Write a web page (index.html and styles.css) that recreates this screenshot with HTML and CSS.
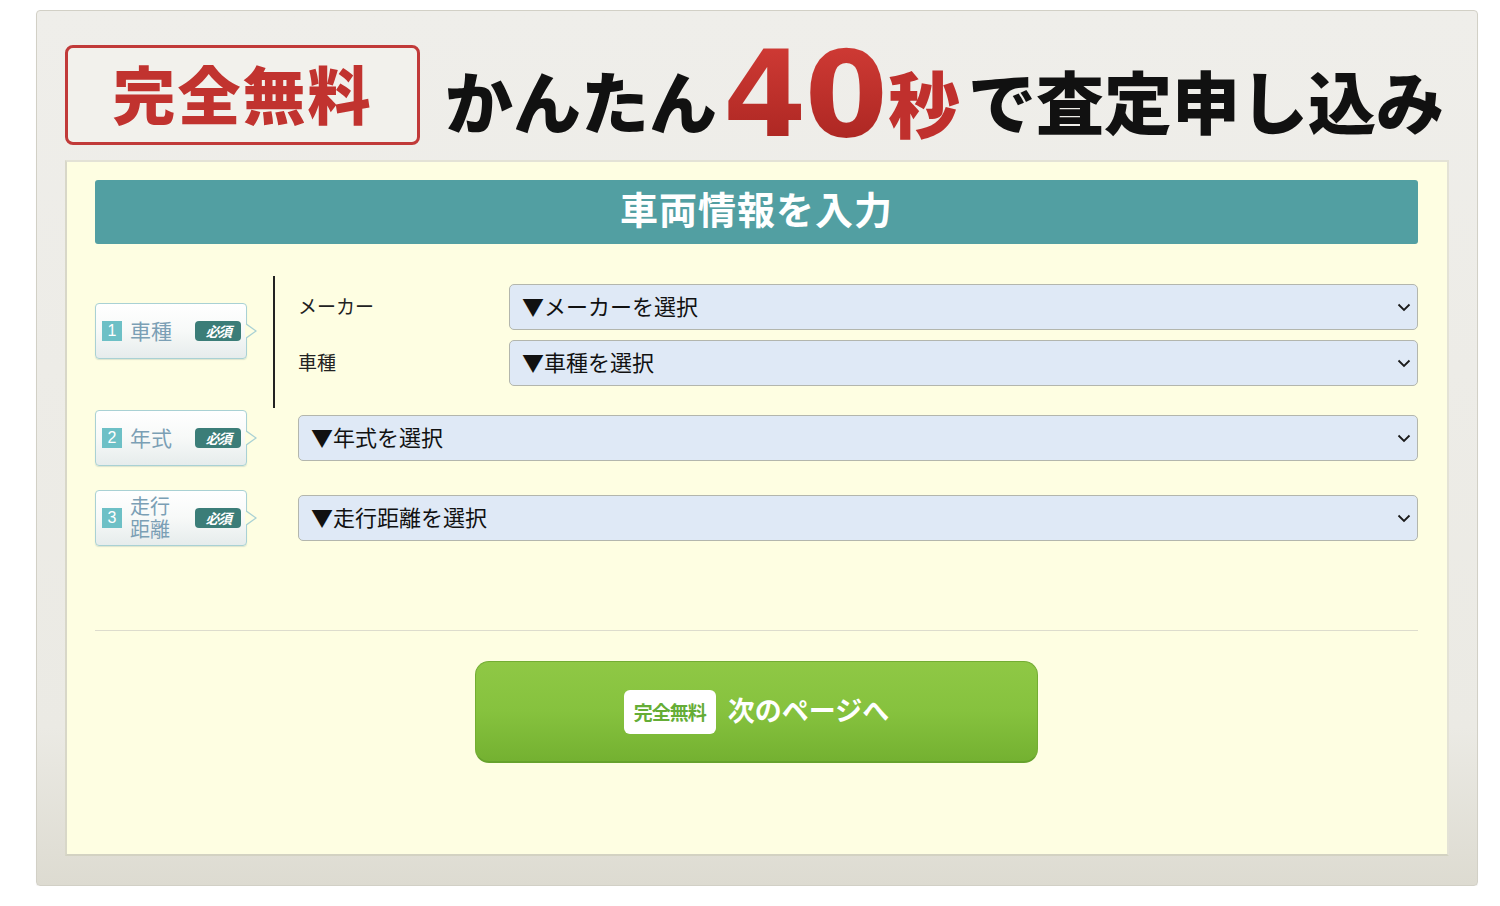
FILE: index.html
```html
<!DOCTYPE html>
<html lang="ja">
<head>
<meta charset="utf-8">
<title>車両情報を入力</title>
<link rel="stylesheet" href="styles.css">
</head>
<body>
<div class="frame">
  <header class="head">
    <div class="free-box"><span>完全無料</span></div>
    <h1 class="title"><span class="k">かんたん</span><span class="num">40</span><span class="sec">秒</span><span class="k">で査定申し込み</span></h1>
  </header>
  <main class="panel">
    <h2 class="bar"><span>車両情報を入力</span></h2>

    <div class="row row-car">
      <div class="tag"><span class="no">1</span><span class="tag-text">車種</span><span class="req">必須</span></div>
      <div class="sub">
        <div class="sub-row">
          <span class="sub-label">メーカー</span>
          <div class="select sel-sub"><span>▼メーカーを選択</span><svg class="chev" width="14" height="9" viewBox="0 0 14 9"><path d="M1.5 1.5 L7 7 L12.5 1.5" fill="none" stroke="#1a1a1a" stroke-width="1.8"/></svg></div>
        </div>
        <div class="sub-row">
          <span class="sub-label">車種</span>
          <div class="select sel-sub"><span>▼車種を選択</span><svg class="chev" width="14" height="9" viewBox="0 0 14 9"><path d="M1.5 1.5 L7 7 L12.5 1.5" fill="none" stroke="#1a1a1a" stroke-width="1.8"/></svg></div>
        </div>
      </div>
    </div>

    <div class="row row-single row-year">
      <div class="tag"><span class="no">2</span><span class="tag-text">年式</span><span class="req">必須</span></div>
      <div class="select sel-wide"><span>▼年式を選択</span><svg class="chev" width="14" height="9" viewBox="0 0 14 9"><path d="M1.5 1.5 L7 7 L12.5 1.5" fill="none" stroke="#1a1a1a" stroke-width="1.8"/></svg></div>
    </div>

    <div class="row row-single row-dist">
      <div class="tag"><span class="no">3</span><span class="tag-text two"><span class="ln">走行</span><span class="ln">距離</span></span><span class="req">必須</span></div>
      <div class="select sel-wide"><span>▼走行距離を選択</span><svg class="chev" width="14" height="9" viewBox="0 0 14 9"><path d="M1.5 1.5 L7 7 L12.5 1.5" fill="none" stroke="#1a1a1a" stroke-width="1.8"/></svg></div>
    </div>

    <hr class="rule">

    <div class="btn-wrap">
      <button class="next-btn" type="button"><span class="btn-free">完全無料</span><span class="btn-text">次のページへ</span></button>
    </div>
  </main>
</div>
</body>
</html>
```

FILE: styles.css
```css
html, body {
  margin: 0;
  padding: 0;
  background: #ffffff;
}

body {
  font-family: "Noto Sans CJK JP", "Noto Sans", sans-serif;
  color: #1a1a1a;
}

.frame {
  box-sizing: border-box;
  width: 1442px;
  height: 876px;
  margin: 10px 0 0 36px;
  padding: 0 28px 29px 28px;
  border: 1px solid #d2d0c6;
  border-radius: 4px;
  background: linear-gradient(to bottom, #efeeea 0%, #ebeae4 82%, #dddbd1 100%);
  box-shadow: 0 1px 1px rgba(0,0,0,0.06);
}

.head {
  box-sizing: border-box;
  height: 149px;
  padding-top: 34px;
  display: flex;
  align-items: flex-start;
}

.free-box {
  box-sizing: border-box;
  width: 355px;
  height: 100px;
  border: 3px solid #c13a39;
  border-radius: 8px;
  background: #f2f1ec;
  display: flex;
  align-items: center;
  justify-content: center;
}

.free-box span {
  color: #c1332f;
  font-size: 63px;
  font-weight: 900;
  letter-spacing: 2px;
  line-height: 1;
  margin-top: -8px;
}

.title {
  margin: 0 0 0 25px;
  display: flex;
  align-items: center;
  height: 100px;
  font-weight: 900;
  line-height: 1;
  white-space: nowrap;
}

.title .k {
  font-size: 68px;
  color: #111111;
  letter-spacing: 0;
  margin-top: 10px;
}

.title .num {
  font-family: "DejaVu Sans", sans-serif;
  font-weight: bold;
  font-size: 120px;
  color: #c0302d;
  margin: 0 2px 0 6px;
  letter-spacing: -2px;
  background: linear-gradient(to bottom, #d23c36, #a82420);
  -webkit-background-clip: text;
  background-clip: text;
  -webkit-text-fill-color: transparent;
}

.title .sec {
  font-size: 72px;
  color: #c0302d;
  margin-right: 8px;
  margin-top: 12px;
}

.panel {
  box-sizing: border-box;
  width: 1384px;
  height: 696px;
  padding: 18px 29px 0 28px;
  border: 2px solid #e3e2d6;
  border-left-color: #d8d7c8;
  border-bottom-color: #d3d2c2;
  background: #fefee2;
}

.bar {
  margin: 0;
  height: 64px;
  border-radius: 3px;
  background: #529fa2;
  color: #ffffff;
  font-size: 38px;
  font-weight: bold;
  letter-spacing: 1px;
  display: flex;
  align-items: center;
  justify-content: center;
  line-height: 1;
}

.bar span {
  margin-top: -8px;
}

.row {
  display: flex;
}

.row-car {
  margin-top: 32px;
  height: 132px;
  align-items: flex-start;
}

.row-car .tag {
  margin-top: 27px;
}

.row-single {
  align-items: center;
  height: 56px;
}

.row-year {
  margin-top: 2px;
}

.row-dist {
  margin-top: 24px;
}

.tag {
  position: relative;
  box-sizing: border-box;
  width: 152px;
  height: 56px;
  flex: 0 0 auto;
  border: 1px solid #a9d1d4;
  border-radius: 4px;
  background: linear-gradient(to bottom, #ffffff 0%, #f7f9f8 50%, #e6ecec 100%);
  box-shadow: 0 1px 1px rgba(120,150,150,0.25);
  display: flex;
  align-items: center;
  padding-left: 6px;
}

.tag::before {
  content: "";
  position: absolute;
  right: -11px;
  top: 50%;
  margin-top: -8px;
  border-left: 11px solid #a9d1d4;
  border-top: 8px solid transparent;
  border-bottom: 8px solid transparent;
}

.tag::after {
  content: "";
  position: absolute;
  right: -9px;
  top: 50%;
  margin-top: -7px;
  border-left: 10px solid #fefee2;
  border-top: 7px solid transparent;
  border-bottom: 7px solid transparent;
}

.no {
  width: 20px;
  height: 20px;
  flex: 0 0 auto;
  background: #6dc0c6;
  color: #ffffff;
  font-family: "Liberation Sans", sans-serif;
  font-size: 16px;
  line-height: 20px;
  text-align: center;
  margin-right: 8px;
}

.tag-text {
  width: 65px;
  color: #7b9fb5;
  font-size: 21px;
  line-height: 1;
  margin-top: -2px;
}

.tag-text.two {
  display: flex;
  flex-direction: column;
  font-size: 20px;
  margin-top: -3px;
}

.tag-text .ln {
  display: block;
  height: 23px;
  line-height: 23px;
}

.req {
  box-sizing: border-box;
  width: 46px;
  height: 20px;
  border-radius: 4px;
  background: #3b7d78;
  color: #ffffff;
  font-size: 14px;
  font-weight: bold;
  font-style: italic;
  line-height: 20px;
  text-align: center;
  letter-spacing: -1.5px;
}

.sub {
  margin-left: 26px;
  height: 132px;
  box-sizing: border-box;
  border-left: 2px solid #222222;
  padding: 8px 0 0 23px;
  display: flex;
  flex-direction: column;
  gap: 10px;
}

.sub-row {
  display: flex;
  align-items: center;
}

.sub-label {
  width: 211px;
  font-size: 19px;
  color: #222222;
  margin-top: -4px;
}

.select {
  box-sizing: border-box;
  height: 46px;
  border: 1px solid #b3b6ad;
  border-radius: 5px;
  background: #dfe9f6;
  display: flex;
  align-items: center;
  justify-content: space-between;
  padding: 0 6px 0 12px;
  font-size: 22px;
  color: #111111;
}

.select span {
  line-height: 1;
  margin-top: -4px;
}

.sel-sub {
  width: 909px;
}

.sel-wide {
  width: 1120px;
  margin-left: 51px;
}

.chev {
  display: block;
}

.rule {
  margin: 84px 0 0 0;
  border: 0;
  height: 1px;
  background: #dddccd;
}

.btn-wrap {
  display: flex;
  justify-content: center;
  margin-top: 30px;
}

.next-btn {
  box-sizing: border-box;
  width: 563px;
  height: 102px;
  border: 1px solid #73ad33;
  border-bottom: 2px solid #66a22c;
  border-radius: 14px;
  background: linear-gradient(to bottom, #8fc845 0%, #86c23e 50%, #74b131 100%);
  display: flex;
  align-items: center;
  justify-content: center;
  gap: 12px;
  padding: 0;
  font-family: "Noto Sans CJK JP", sans-serif;
  cursor: pointer;
}

.btn-free {
  box-sizing: border-box;
  width: 92px;
  height: 44px;
  border-radius: 6px;
  background: #ffffff;
  color: #65ad36;
  font-size: 19px;
  font-weight: bold;
  line-height: 44px;
  text-align: center;
  letter-spacing: -1px;
}

.btn-text {
  color: #ffffff;
  font-size: 27px;
  font-weight: bold;
  line-height: 1;
  margin-top: -4px;
}
```
